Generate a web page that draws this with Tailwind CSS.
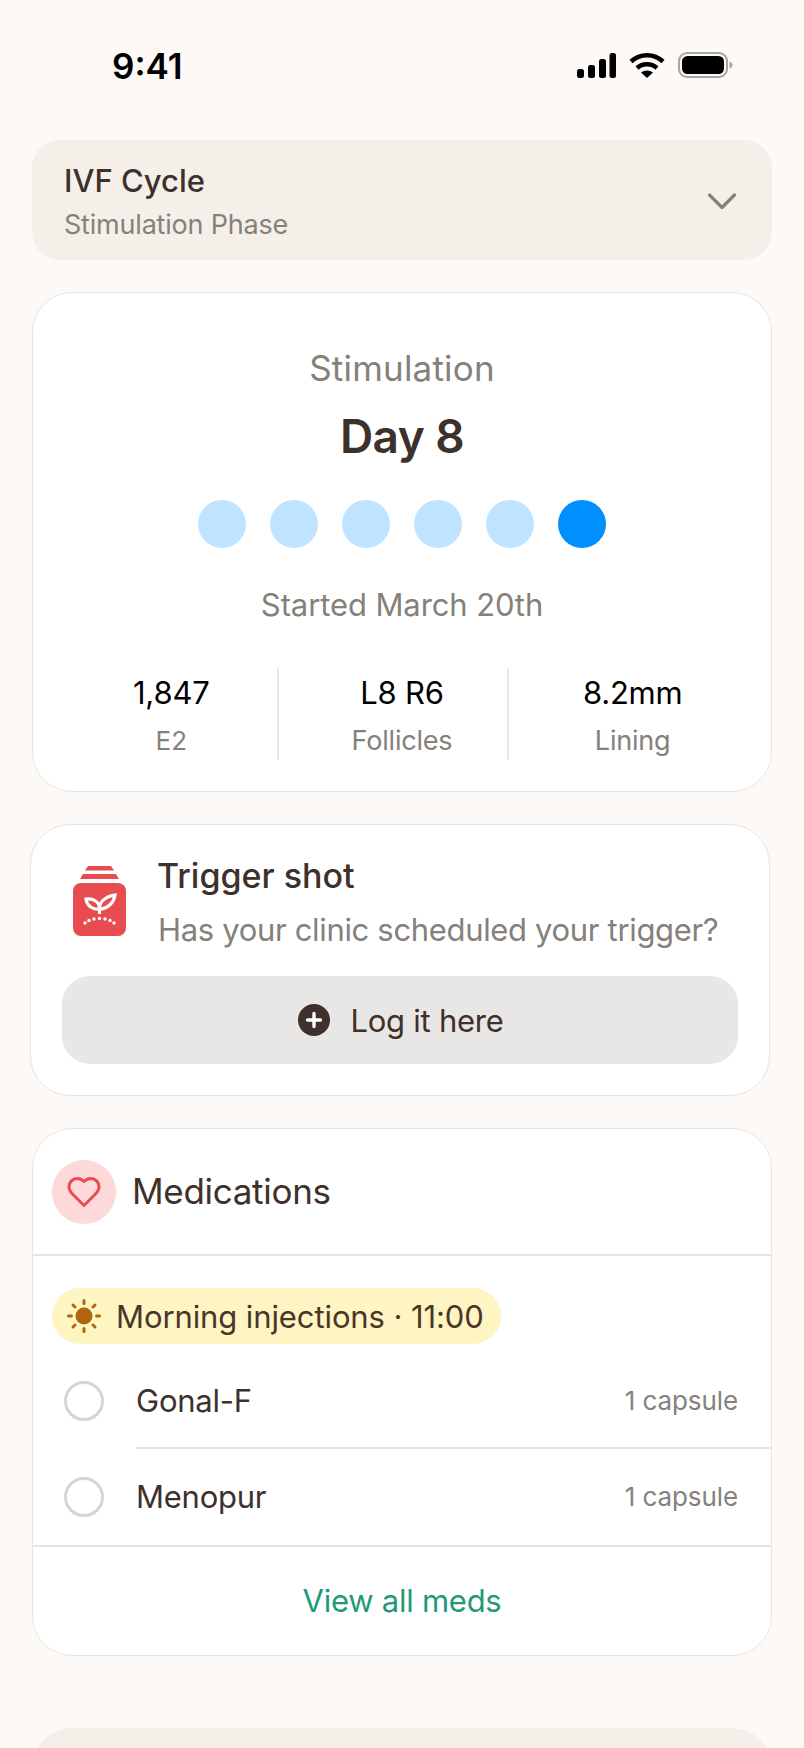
<!doctype html>
<html lang="en">
<head>
<meta charset="utf-8">
<script src="https://cdn.jsdelivr.net/npm/@tailwindcss/browser@4"></script>
</head>
<body class="m-0">
<div class="w-[804px] h-[1748px] overflow-hidden bg-[#fdf9f6] text-[#3e302b] [font-family:Inter,sans-serif]">
  <div class="h-[140px] relative flex items-start justify-between pl-[112px] pr-[71px] pt-[48px]">
    <span class="text-[35px] leading-[36px] font-semibold text-black tracking-[0px]">9:41</span>
    <div class="flex items-center gap-[13px] pt-[4px]">
      <svg width="39" height="25" viewBox="0 0 39 25" fill="#000"><rect x="0" y="16" width="7" height="9" rx="2.5"/><rect x="11" y="12" width="7" height="13" rx="2.5"/><rect x="22" y="6" width="7" height="19" rx="2.5"/><rect x="32.5" y="0" width="6.5" height="25" rx="2.5"/></svg>
      <svg width="36" height="26" viewBox="0 0 36 26" fill="none" stroke="#000" stroke-width="4.5"><path d="M2 9.500C11 1 25 1 34 9.500"/><path d="M8 16C13.500 11 22.500 11 28 16"/><path d="M12 20.500C15.500 17.800 20.500 17.800 24 20.500L18 26Z" fill="#000" stroke="none"/></svg>
      <svg width="55" height="26" viewBox="0 0 55 26"><rect x="1" y="1" width="48" height="24" rx="8" fill="none" stroke="#a8a49e" stroke-width="2"/><rect x="4" y="4" width="42" height="18" rx="5.500" fill="#000"/><path d="M51.500 9.500C53.500 10 54.500 11.500 54.500 13S53.500 16 51.500 16.500Z" fill="#a8a49e"/></svg>
    </div>
  </div>

  <div class="flex flex-col gap-8 px-8">
    <div class="h-[120px] rounded-[28px] bg-[#f5efea] flex items-center justify-between pl-8 pr-9">
      <div class="flex flex-col gap-[8px] pt-[5px]">
        <div class="text-[31px] leading-[37px] font-[550] tracking-[0px]">IVF Cycle</div>
        <div class="text-[27px] leading-[36px] text-[#85817a] tracking-[-0.2px]">Stimulation Phase</div>
      </div>
      <svg class="mt-[2px]" width="28" height="16" viewBox="0 0 28 16" fill="none" stroke="#85817a" stroke-width="3.2" stroke-linecap="round" stroke-linejoin="round"><path d="M1.500 2 14 14.500 26.500 2"/></svg>
    </div>

    <div class="h-[500px] rounded-[40px] bg-white border border-[#e8e4df] flex flex-col items-center pt-[53px] px-[31px]">
      <div class="text-[35px] leading-[44px] text-[#85817a] tracking-[0.2px]">Stimulation</div>
      <div class="mt-[17px] text-[46px] leading-[58px] font-semibold tracking-[-0.6px]">Day 8</div>
      <div class="mt-[35px] flex gap-6">
        <span class="w-12 h-12 rounded-full bg-[#c0e3ff]"></span>
        <span class="w-12 h-12 rounded-full bg-[#c0e3ff]"></span>
        <span class="w-12 h-12 rounded-full bg-[#c0e3ff]"></span>
        <span class="w-12 h-12 rounded-full bg-[#c0e3ff]"></span>
        <span class="w-12 h-12 rounded-full bg-[#c0e3ff]"></span>
        <span class="w-12 h-12 rounded-full bg-[#008fff]"></span>
      </div>
      <div class="mt-[36px] text-[31px] leading-[42px] text-[#85817a] tracking-[-0.1px]">Started March 20th</div>
      <div class="mt-[42px] w-full grid grid-cols-3 gap-4 h-[92px]">
        <div class="border-r-2 border-[#ece8e4] flex flex-col items-center pt-[6px] pl-[2px]">
          <div class="text-[31px] leading-[38px] text-black tracking-[-0.15px]">1,847</div>
          <div class="mt-[11px] text-[26px] leading-[36px] text-[#85817a]">E2</div>
        </div>
        <div class="border-r-2 border-[#ece8e4] flex flex-col items-center pt-[6px] pl-[2px]">
          <div class="text-[31px] leading-[38px] text-black tracking-[-0.25px]">L8 R6</div>
          <div class="mt-[11px] text-[27px] leading-[36px] text-[#85817a] tracking-[-0.2px]">Follicles</div>
        </div>
        <div class="flex flex-col items-center pt-[6px]">
          <div class="text-[31px] leading-[38px] text-black tracking-[-0.25px]">8.2mm</div>
          <div class="mt-[11px] text-[27px] leading-[36px] text-[#85817a] tracking-[-0.2px]">Lining</div>
        </div>
      </div>
    </div>

    <div class="w-[740px] -ml-[2px] h-[272px] rounded-[40px] bg-white border border-[#e8e4df] px-[31px] pt-[29px]">
      <div class="flex items-start">
        <svg class="ml-[11px] mt-[12px] shrink-0" width="53" height="70" viewBox="0 0 53 70">
          <path d="M15 0H38L41 4.500H12Z" fill="#e84c51"/>
          <path d="M10 8H43L46 13H7Z" fill="#e84c51"/>
          <rect x="0" y="17" width="53" height="53" rx="8" fill="#e84c51"/>
          <path d="M26.500 41V48" stroke="#fff" stroke-width="3"/>
          <path d="M13 33C20 32 27 36 26.500 43C20 44 14 40 13 33Z" fill="#e84c51" stroke="#fff" stroke-width="3.200"/>
          <path d="M42 29C34 30 26 35 26.500 43C34 43 41 37 42 29Z" fill="#e84c51" stroke="#fff" stroke-width="3.200"/>
          <g fill="#fff"><circle cx="12" cy="57" r="1.700"/><circle cx="16" cy="54.500" r="1.700"/><circle cx="21" cy="53" r="1.700"/><circle cx="26.500" cy="52.500" r="1.700"/><circle cx="32" cy="53" r="1.700"/><circle cx="37" cy="54.500" r="1.700"/><circle cx="41" cy="57" r="1.700"/></g>
        </svg>
        <div class="ml-[31px] flex flex-col">
          <div class="text-[34px] leading-[44px] font-[550] tracking-[0px]">Trigger shot</div>
          <div class="pl-[1px] mt-[11px] text-[31px] leading-[42px] text-[#85817a] tracking-[-0.33px] whitespace-nowrap">Has your clinic scheduled your trigger?</div>
        </div>
      </div>
      <div class="mt-[25px] h-[88px] rounded-[28px] bg-[#e9e7e5] flex items-center justify-center gap-[20px] pl-[2px]">
        <svg width="32" height="32" viewBox="0 0 32 32"><circle cx="16" cy="16" r="16" fill="#3e302b"/><path d="M16 9.500V22.500M9.500 16H22.500" stroke="#fff" stroke-width="3.400" stroke-linecap="round"/></svg>
        <span class="pt-[2px] text-[31px] leading-[40px] tracking-[-0.25px]">Log it here</span>
      </div>
    </div>

    <div class="h-[528px] rounded-[40px] bg-white border border-[#e8e4df]">
      <div class="h-[127px] flex items-center pl-[19px] border-b-2 border-[#e6e4e1]">
        <div class="w-16 h-16 rounded-full bg-[#fdd9d9] flex items-center justify-center">
          <svg width="36" height="36" viewBox="0 0 24 24" fill="none" stroke="#e84c51" stroke-width="2" stroke-linecap="round" stroke-linejoin="round"><path d="M19 14c1.490-1.460 3-3.210 3-5.500A5.500 5.500 0 0 0 16.500 3c-1.760 0-3 .5-4.500 2-1.500-1.500-2.740-2-4.500-2A5.500 5.500 0 0 0 2 8.500c0 2.300 1.500 4.050 3 5.500l7 7Z"/></svg>
        </div>
        <span class="ml-[16px] pb-[2px] text-[35px] leading-[44px] tracking-[-0.3px]">Medications</span>
      </div>
      <div class="pl-[19px] pt-[32px]">
        <div class="inline-flex items-center h-14 rounded-full bg-[#fef5c3] pl-[14px] pr-[17px] gap-[14px] text-[#4a3628]">
          <svg width="36" height="36" viewBox="0 0 36 36" stroke="#b0660a" stroke-width="3" stroke-linecap="round"><circle cx="18" cy="18" r="8.500" fill="#b0660a" stroke="none"/><path d="M18 2.500V5.500M18 30.500V33.500M2.500 18H5.500M30.500 18H33.500M7 7 9 9M27 27 29 29M7 29 9 27M27 9 29 7"/></svg>
          <span class="pt-[2px] text-[31px] leading-[40px] tracking-[-0.1px] whitespace-nowrap">Morning injections · 11:00</span>
        </div>
      </div>
      <div class="mt-[1px]">
        <div class="h-[104px] flex items-center pl-[31px]">
          <span class="mt-[8px] w-10 h-10 rounded-full border-[3px] border-[#d6d5d1] shrink-0"></span>
          <div class="ml-8 flex-1 h-full flex items-center justify-between pr-[33px] pt-[10px] border-b-2 border-[#e6e4e1]">
            <span class="text-[31px] leading-[40px] tracking-[-0.25px]">Gonal-F</span>
            <span class="text-[26px] leading-[36px] text-[#85817a] tracking-[-0.1px]">1 capsule</span>
          </div>
        </div>
        <div class="h-[98px] flex items-center pl-[31px] border-b-2 border-[#e6e4e1]">
          <span class="w-10 h-10 rounded-full border-[3px] border-[#d6d5d1] shrink-0"></span>
          <div class="ml-8 flex-1 flex items-center justify-between pr-[33px]">
            <span class="text-[31px] leading-[40px] tracking-[-0.25px]">Menopur</span>
            <span class="text-[26px] leading-[36px] text-[#85817a] tracking-[-0.1px]">1 capsule</span>
          </div>
        </div>
        <div class="h-[104px] flex items-center justify-center pt-[4px]">
          <span class="text-[31px] leading-[40px] text-[#1f9a78] tracking-[-0.25px]">View all meds</span>
        </div>
      </div>
    </div>

    <div class="mt-[40px] h-[120px] rounded-[40px] bg-[#f5efe9]"></div>
  </div>
</div>
</body>
</html>
